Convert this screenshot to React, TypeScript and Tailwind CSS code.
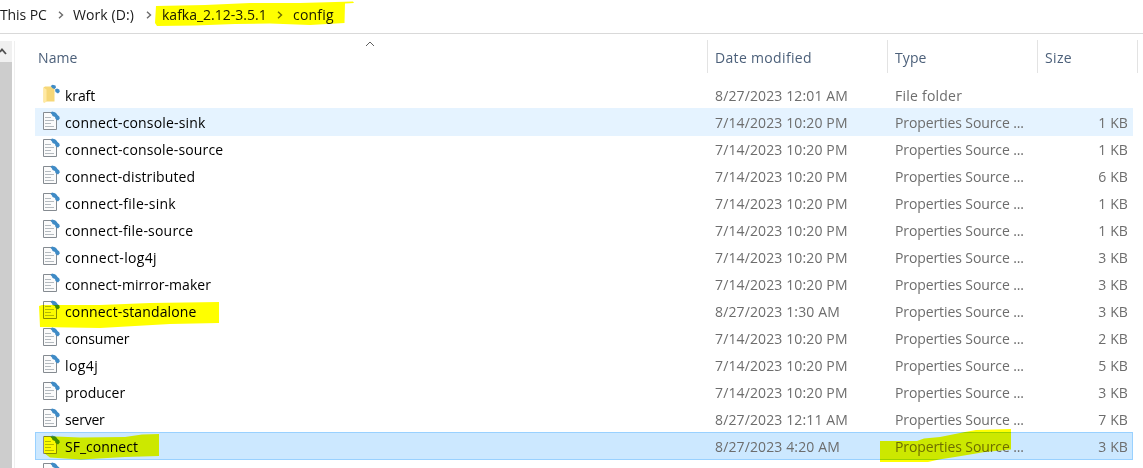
import React from "react";

type Row = {
  name: string;
  date: string;
  type: string;
  size: string;
  fit: string;
  kind?: "folder";
  state?: "hover" | "selected";
};

const SRC = "Properties Source ...";
const D = "7/14/2023 10:20 PM";

const rows: Row[] = [
  { name: "kraft", date: "8/27/2023 12:01 AM", type: "File folder", size: "", fit: "tracking-[-0.1px]", kind: "folder" },
  { name: "connect-console-sink", date: D, type: SRC, size: "1 KB", fit: "tracking-[0.16px]", state: "hover" },
  { name: "connect-console-source", date: D, type: SRC, size: "1 KB", fit: "tracking-[0.15px]" },
  { name: "connect-distributed", date: D, type: SRC, size: "6 KB", fit: "tracking-[0.12px]" },
  { name: "connect-file-sink", date: D, type: SRC, size: "1 KB", fit: "tracking-[0.25px]" },
  { name: "connect-file-source", date: D, type: SRC, size: "1 KB", fit: "tracking-[0.2px]" },
  { name: "connect-log4j", date: D, type: SRC, size: "3 KB", fit: "tracking-[0.35px]" },
  { name: "connect-mirror-maker", date: D, type: SRC, size: "3 KB", fit: "tracking-[0.07px]" },
  { name: "connect-standalone", date: "8/27/2023 1:30 AM", type: SRC, size: "3 KB", fit: "tracking-[0.13px]" },
  { name: "consumer", date: D, type: SRC, size: "2 KB", fit: "tracking-[-0.15px]" },
  { name: "log4j", date: D, type: SRC, size: "5 KB", fit: "tracking-[0.4px]" },
  { name: "producer", date: D, type: SRC, size: "3 KB", fit: "tracking-[0px]" },
  { name: "server", date: "8/27/2023 12:11 AM", type: SRC, size: "7 KB", fit: "tracking-[-0.2px]" },
  { name: "SF_connect", date: "8/27/2023 4:20 AM", type: SRC, size: "3 KB", fit: "tracking-[0px]", state: "selected" },
];

const background = {
  none: "border-transparent",
  hover: "border-[#e5f3ff] bg-[#e5f3ff]",
  selected: "border-[#99d1ff] bg-[#cce8ff]",
};

function FileIcon() {
  return (
    <svg viewBox="0 0 18 20" className="h-5 w-[18px] shrink-0 self-start">
      <path d="M1.5 1.5H10L14.5 6V18.5H1.5Z" fill="#fbfbfb" stroke="#858b91" />
      <path d="M3 6.5H9M3 9.5H12M3 12.5H9M3 15.5H12" stroke="#b4babf" />
      <path d="M8.500 2 10 .6 13 1.300 14.500 2.500 15.500 4 17.300 5.500 17.800 7.500 16 9.600 13.500 8 13 6 10.500 5 10 3.500Z" fill="#3f8bc6" />
    </svg>
  );
}

function FolderIcon() {
  return (
    <svg viewBox="0 0 18 20" className="h-5 w-[18px] shrink-0 self-start">
      <path d="M1.5 3.5 3 2.5H12.5V17.5H4.5L1.5 18.5Z" fill="#f6d777" />
      <path d="M1.5 3.5 4.5 5.5V17.5L2.5 19 1.5 18Z" fill="#ffe9a3" />
      <path d="M8.700 2 10.500 .7 13.500 1.500 14 3.500 12.500 5 10.500 4.300ZM13 5.500 15 4.500 17.300 5.500 17.800 7.700 16 9.500 13.500 8Z" fill="#3f8bc6" />
    </svg>
  );
}

function Chevron({ className }: { className: string }) {
  return (
    <svg viewBox="0 0 6 8" className={`h-2 w-1.5 shrink-0 ${className}`}>
      <path d="M1 .8 4.5 4 1 7.2" fill="none" stroke="#6b6b6b" strokeWidth="1.4" />
    </svg>
  );
}

export default function App() {
  return (
    <div className="relative flex h-[468px] w-[1143px] flex-col overflow-hidden bg-white font-['Open_Sans','Noto_Sans',sans-serif] text-[14px] leading-5 text-black">
      <nav className="flex h-[34px] shrink-0 items-center border-b border-[#d9d9d9] pb-[3px] text-[#1a1a1a]">
        <span className="w-[58px] whitespace-nowrap tracking-[-0.1px]">This PC</span>
        <Chevron className="mr-[9px]" />
        <span className="w-[73px] whitespace-nowrap tracking-[0.1px]">Work (D:)</span>
        <Chevron className="mr-[10px]" />
        <span className="w-[115px] whitespace-nowrap">kafka_2.12-3.5.1</span>
        <Chevron className="mr-[10px]" />
        <span className="whitespace-nowrap tracking-[0.2px]">config</span>
      </nav>
      <div className="flex min-h-0 flex-1">
        <aside className="mt-[7px] flex w-3 shrink-0 flex-col bg-[#cdcdcd]">
          <div className="flex h-[21px] items-center bg-[#f0f0f0]">
            <svg viewBox="0 0 7 7" className="h-[7px] w-[7px]">
              <path d="M0 4 2 1.5 6 6" fill="none" stroke="#505050" strokeWidth="1.8" />
            </svg>
          </div>
        </aside>
        <div className="ml-[2px] mt-[7px] w-px shrink-0 bg-[#efefef]" />
        <main className="ml-5 w-[1103px] shrink-0">
          <header className="mt-1.5 flex h-[33px] items-center text-[#4c607a]">
            <div className="flex h-full w-[672px] items-center pl-[3px]">
              <span className="w-[327px] pt-0.5 tracking-[0.1px]">Name</span>
              <svg viewBox="0 0 10 6" className="mb-[26px] h-1.5 w-2.5">
                <path d="M1 5 5 1 9 5" fill="none" stroke="#606060" />
              </svg>
            </div>
            <div className="flex h-full w-[180px] items-center border-l border-[#e3e3e3] pl-[7px] pt-0.5 tracking-[0.33px]">Date modified</div>
            <div className="flex h-full w-[150px] items-center border-l border-[#e3e3e3] pl-[7px] pt-0.5 tracking-[0.1px]">Type</div>
            <div className="flex h-full w-[101px] items-center border-x border-[#e3e3e3] pl-[7px] pt-0.5 tracking-[0.35px]">Size</div>
          </header>
          <div className="mt-2">
            {rows.map((r) => (
              <div key={r.name} className={`-mb-px flex h-7 w-[1098px] items-center whitespace-nowrap border ${background[r.state ?? "none"]}`}>
                <div className="flex w-[679px] items-center pl-1.5">
                  {r.kind === "folder" ? <FolderIcon /> : <FileIcon />}
                  <span className={`ml-[5px] pt-0.5 ${r.fit}`}>{r.name}</span>
                </div>
                <div className="w-[180px] pt-0.5 tracking-[0.13px] text-[#6d6d6d]">{r.date}</div>
                <div className={`w-[150px] pt-0.5 text-[#6d6d6d] ${r.kind === "folder" ? "tracking-[0.23px]" : "tracking-[-0.1px]"}`}>{r.type}</div>
                <div className="flex-1 pr-1 pt-0.5 text-right tracking-[0.1px] text-[#6d6d6d]">{r.size}</div>
              </div>
            ))}
            <div className="flex h-7 items-start border border-transparent pl-1.5 pt-0.5"><FileIcon /></div>
          </div>
        </main>
      </div>
      <svg viewBox="0 0 1143 468" className="pointer-events-none absolute inset-0 h-full w-full mix-blend-multiply" fill="#ffff00">
        <path d="M156 6 205 5 250 3 300 3 353 1.5 354 3 345 3.500 344.500 23 310 25 270 23.500 235 24 195 25.500 157 26 155 23Z" />
        <path d="M39 306 42 305 100 305 150 303 219 302 219 323 170 324 135 326 100 328 40 327Z" />
        <path d="M44 436 80 437.500 125 437 142 434.500 159 434V456L125 457 81 459.500 50 457.500 44 453Z" />
        <path d="M880 441H917L924 438.500 940 437 965 432 976 430 1011 429V449.500L985 452 955 457 939 459.500 928 462H880Z" />
      </svg>
    </div>
  );
}
